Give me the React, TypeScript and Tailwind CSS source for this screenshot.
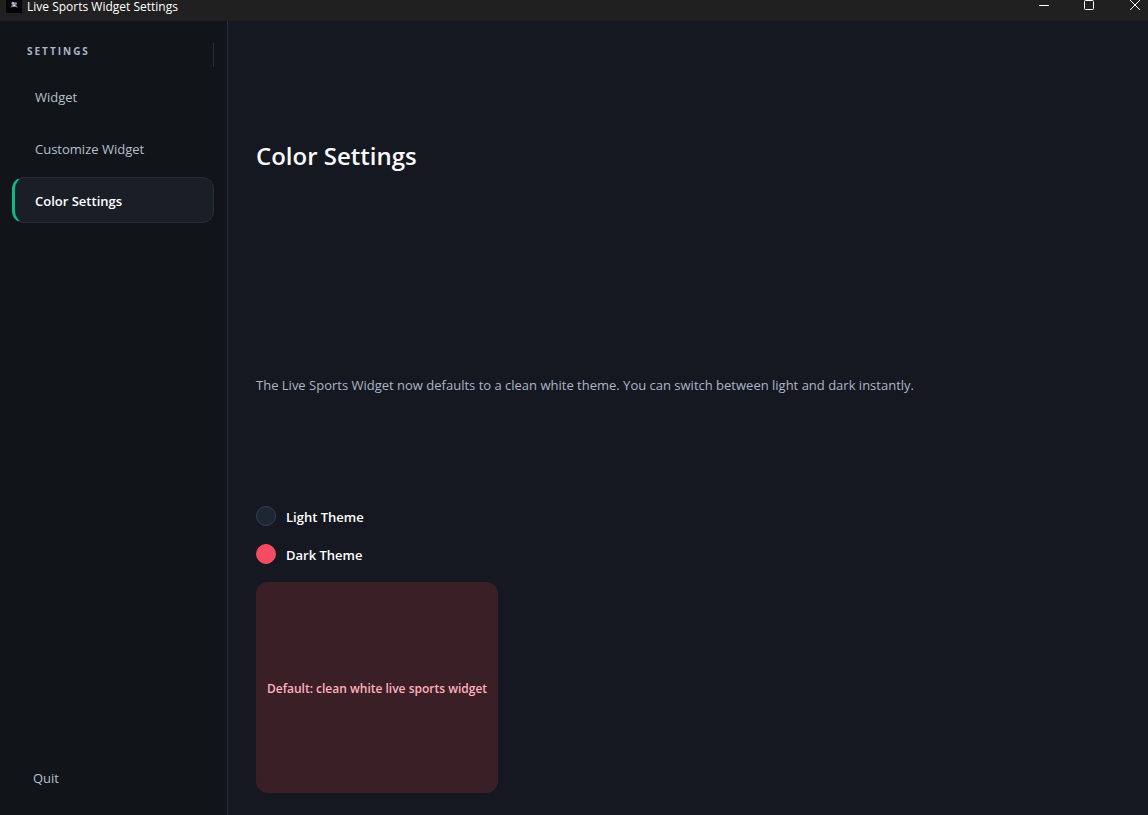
import { useState } from "react";
import clsx from "clsx";

const PAGES = ["Widget", "Customize Widget", "Color Settings"];

const THEMES = [
  { id: "light", label: "Light Theme" },
  { id: "dark", label: "Dark Theme" },
];

function AppIcon() {
  return (
    <svg viewBox="0 0 16 13" className="w-4 h-[13px] shrink-0" aria-hidden="true">
      <rect width="16" height="13" fill="#050507" />
      <circle cx="7" cy="3.2" r="1.5" fill="#b9b9c6" />
      <circle cx="9.6" cy="3.6" r="1.3" fill="#9c9cb4" />
      <path d="M4.2 7.8 6.2 4.6h3.6l2.2 3.2-2-.8H6.4z" fill="#77778e" />
      <path d="M7 4.5h2v1.8H7z" fill="#dadae6" />
    </svg>
  );
}

function TitleBar() {
  return (
    <header className="flex h-[21px] shrink-0 items-start justify-between bg-[#202020] pl-1.5 text-white">
      <div className="flex items-start gap-[5px]">
        <AppIcon />
        <span className="text-xs leading-[14px]">Live Sports Widget Settings</span>
      </div>
      <div className="flex">
        <button type="button" aria-label="Minimize" className="flex w-[46px] justify-center">
          <svg width="12" height="12" viewBox="0 0 12 12">
            <path d="M1 5.5h10" stroke="currentColor" />
          </svg>
        </button>
        <button type="button" aria-label="Maximize" className="flex w-11 justify-center">
          <svg width="12" height="12" viewBox="0 0 12 12" fill="none">
            <rect x="1.5" y="0.5" width="9" height="9" rx="1" stroke="currentColor" />
          </svg>
        </button>
        <button type="button" aria-label="Close" className="flex w-[37px] justify-end pr-[7px]">
          <svg width="12" height="12" viewBox="0 0 12 12">
            <path d="M1 0l10 10M11 0L1 10" stroke="currentColor" />
          </svg>
        </button>
      </div>
    </header>
  );
}

function Sidebar({
  page,
  onSelect,
}: {
  page: string;
  onSelect: (page: string) => void;
}) {
  return (
    <aside className="flex w-[228px] shrink-0 flex-col border-r border-[#2a2d38] bg-[#111418] pt-[22px] pr-[13px] pb-3.5 pl-3">
      <div className="flex h-6 border-r border-[#2a2e3a] pl-[15px]">
        <h2 className="text-[10px] leading-4 font-bold tracking-[2px] text-[#a9b6c8]">
          SETTINGS
        </h2>
      </div>
      <nav className="mt-1.5 flex flex-col gap-1.5">
        {PAGES.map((item) => (
          <button
            key={item}
            type="button"
            onClick={() => onSelect(item)}
            className={clsx(
              "h-[46px] rounded-xl border border-l-[3px] pt-1 pl-5 text-left text-[13px]",
              item === page
                ? "border-[#282c38] border-l-[#10b981] bg-[#1a1e27] font-semibold text-white"
                : "border-transparent text-[#b4c0cf]"
            )}
          >
            {item}
          </button>
        ))}
      </nav>
      <button
        type="button"
        className="mt-auto h-11 pl-[21px] text-left text-[13px] text-[#b4c0cf]"
      >
        Quit
      </button>
    </aside>
  );
}

export default function App() {
  const [page, setPage] = useState("Color Settings");
  const [theme, setTheme] = useState("dark");

  return (
    <div className="flex min-h-dvh flex-col bg-[#151820] font-['Open_Sans','Noto_Sans',sans-serif]">
      <TitleBar />
      <div className="flex grow">
        <Sidebar page={page} onSelect={setPage} />
        <main className="flex min-w-0 grow flex-col gap-[18px] px-7 pt-7 pb-[22px]">
          <h1 className="flex grow items-center text-2xl leading-[30px] font-semibold text-[#f8fafc]">
            Color Settings
          </h1>
          <p className="flex grow items-center text-[13px] leading-[22px] text-[#a9b6c8]">
            The Live Sports Widget now defaults to a clean white theme. You can
            switch between light and dark instantly.
          </p>
          {THEMES.map(({ id, label }) => (
            <label
              key={id}
              className="flex h-5 items-center gap-2.5 self-start text-[13px] leading-5 font-semibold text-white"
            >
              <input
                type="radio"
                name="theme"
                value={id}
                checked={theme === id}
                onChange={() => setTheme(id)}
                className="size-5 appearance-none rounded-full border border-[#334155] bg-[#1e2633] checked:border-[#f24b62] checked:bg-[#f24b62]"
              />
              <span className="pt-0.5">{label}</span>
            </label>
          ))}
          <div className="flex w-[242px] grow items-center justify-center rounded-xl bg-[#3b1f26] pt-0.5 text-xs leading-6 font-semibold text-[#feb2bd]">
            Default: clean white live sports widget
          </div>
        </main>
      </div>
    </div>
  );
}
